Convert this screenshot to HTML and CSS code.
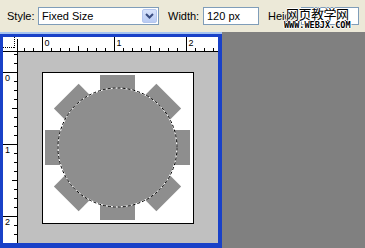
FILE: index.html
```html
<!DOCTYPE html>
<html lang="zh-CN">

<head>
    <meta charset="UTF-8">
    <title>Fixed Size</title>
    <link rel="stylesheet" href="styles.css">
</head>

<body>
    <div class="toolbar">
        <span class="label label-style">Style:</span>
        <div class="select">
            <span>Fixed Size</span>
            <span class="select-btn">
                <svg width="9" height="6" viewBox="0 0 9 6">
                    <path d="M1 1 L4.5 4.5 L8 1" fill="none" stroke="#3a4d80" stroke-width="2"/>
                </svg>
            </span>
        </div>
        <span class="label label-width">Width:</span>
        <div class="field field-width">120 px</div>
        <span class="label label-height">Heigh</span>
        <div class="field field-height"></div>

        <div class="watermark">
            <div class="wm-cn">网页教学网</div>
            <div class="wm-en">WWW.WEBJX.COM</div>
        </div>
    </div>

    <div class="workspace">
        <div class="frame">
            <div class="corner">
                <svg width="15" height="15">
                    <line x1="11.5" y1="0" x2="11.5" y2="11" stroke="#000" stroke-dasharray="1 1"/>
                    <line x1="0" y1="10.5" x2="11" y2="10.5" stroke="#000" stroke-dasharray="1 1"/>
                    <line x1="0" y1="14.5" x2="15" y2="14.5" stroke="#000"/>
                    <line x1="14.5" y1="2" x2="14.5" y2="15" stroke="#000"/>
                </svg>
            </div>
            <div class="ruler"><svg id="rulerH" width="200" height="15"></svg></div>
            <div class="ruler"><svg id="rulerV" width="15" height="191"></svg></div>
            <div class="canvas">
                <div class="doc">
                    <svg width="150" height="150" viewBox="0 0 150 150">
                        <g fill="#8e8e8e">
                            <circle cx="74.5" cy="74.5" r="59"/>
                            <rect x="57" y="2" width="35" height="145"/>
                            <rect x="2" y="57" width="145" height="35"/>
                            <rect x="57" y="2" width="35" height="145" transform="rotate(45 74.5 74.5)"/>
                            <rect x="57" y="2" width="35" height="145" transform="rotate(-45 74.5 74.5)"/>
                        </g>
                        <circle cx="74.5" cy="74.5" r="59.5" fill="none" stroke="#fff" stroke-width="1"/>
                        <circle cx="74.5" cy="74.5" r="59.5" fill="none" stroke="#000" stroke-width="1" stroke-dasharray="3 2"/>
                    </svg>
                </div>
            </div>
        </div>
    </div>

    <script>
        var NS = 'http://www.w3.org/2000/svg';

        function addLine(svg, x1, y1, x2, y2) {
            var l = document.createElementNS(NS, 'line');
            l.setAttribute('x1', x1);
            l.setAttribute('y1', y1);
            l.setAttribute('x2', x2);
            l.setAttribute('y2', y2);
            l.setAttribute('stroke', '#000');
            svg.appendChild(l);
        }

        function addText(svg, x, y, txt) {
            var t = document.createElementNS(NS, 'text');
            t.setAttribute('x', x);
            t.setAttribute('y', y);
            t.setAttribute('class', 'ruler-num');
            t.textContent = txt;
            svg.appendChild(t);
        }

        // regua horizontal: zero em 24px, 9px por divisao
        var h = document.getElementById('rulerH');
        addLine(h, 0, 14.5, 200, 14.5);
        for (var n = -2; n <= 19; n++) {
            var x = 24 + 9 * n + 0.5;
            if (n % 8 === 0) {
                addLine(h, x, 0, x, 15);
                addText(h, x + 2, 8.5, n / 8);
            } else if (n % 4 === 0) {
                addLine(h, x, 9, x, 15);
            } else {
                addLine(h, x, 11, x, 15);
            }
        }

        // regua vertical: zero em 20px
        var v = document.getElementById('rulerV');
        addLine(v, 14.5, 0, 14.5, 191);
        for (var m = -2; m <= 19; m++) {
            var y = 20 + 9 * m + 0.5;
            if (m % 8 === 0) {
                addLine(v, 0, y, 15, y);
                addText(v, 2, y + 8.5, m / 8);
            } else if (m % 4 === 0) {
                addLine(v, 9, y, 15, y);
            } else {
                addLine(v, 11, y, 15, y);
            }
        }
    </script>
</body>

</html>
```

FILE: styles.css
```css
body {
    margin: 0;
    width: 365px;
    height: 248px;
    overflow: hidden;
    background-color: #808080;
    font-family: "Liberation Sans", Arial, sans-serif;
    font-size: 11px;
    color: #000;
}

.toolbar {
    position: relative;
    height: 32px;
    background-color: #ece9d8;
    display: flex;
    align-items: center;
    padding-left: 7px;
    box-sizing: border-box;
}

.label-style {
    width: 31px;
}

.label-width {
    margin-left: 9px;
    width: 35px;
}

.label-height {
    margin-left: 9px;
    width: 33px;
}

.select {
    width: 121px;
    height: 18px;
    box-sizing: border-box;
    border: 1px solid #7f9db9;
    background-color: white;
    display: flex;
    align-items: center;
    justify-content: space-between;
    padding: 0 1px 0 3px;
}

.select-btn {
    width: 15px;
    height: 14px;
    box-sizing: border-box;
    border: 1px solid #b4c6ee;
    border-radius: 2px;
    background: linear-gradient(#d8e3fb, #b9cbf3);
    display: flex;
    align-items: center;
    justify-content: center;
}

.field {
    height: 18px;
    box-sizing: border-box;
    border: 1px solid #7f9db9;
    background-color: white;
    padding-left: 3px;
    line-height: 16px;
}

.field-width {
    width: 56px;
}

.field-height {
    width: 58px;
}

.watermark {
    position: absolute;
    left: 284px;
    top: 6px;
    text-align: center;
    color: #000;
    text-shadow: 1px 0 #fff, -1px 0 #fff, 0 1px #fff, 0 -1px #fff;
}

.wm-cn {
    font-family: "Noto Sans CJK SC", sans-serif;
    font-size: 13px;
    line-height: 15px;
    letter-spacing: -0.5px;
}

.wm-en {
    font-family: "DejaVu Sans Mono", monospace;
    font-weight: bold;
    font-size: 8.5px;
    line-height: 9px;
}

.workspace {
    height: 216px;
}

.frame {
    width: 222px;
    height: 216px;
    box-sizing: border-box;
    background-color: #1941c8;
    border-top: 2px solid #a6c4f0;
    padding: 3px 4px 5px 3px;
    display: grid;
    grid-template-columns: 15px 200px;
    grid-template-rows: 15px 191px;
}

.corner,
.ruler {
    background-color: white;
}

.corner svg,
.ruler svg {
    display: block;
}

.ruler-num {
    font-family: "Liberation Sans", Arial, sans-serif;
    font-size: 9px;
    fill: #000;
}

.canvas {
    background-color: #c0c0c0;
    padding: 20px 0 0 24px;
    box-sizing: border-box;
}

.doc {
    width: 150px;
    height: 150px;
    border: 1px solid #000;
    background-color: white;
}

.doc svg {
    display: block;
}
```
